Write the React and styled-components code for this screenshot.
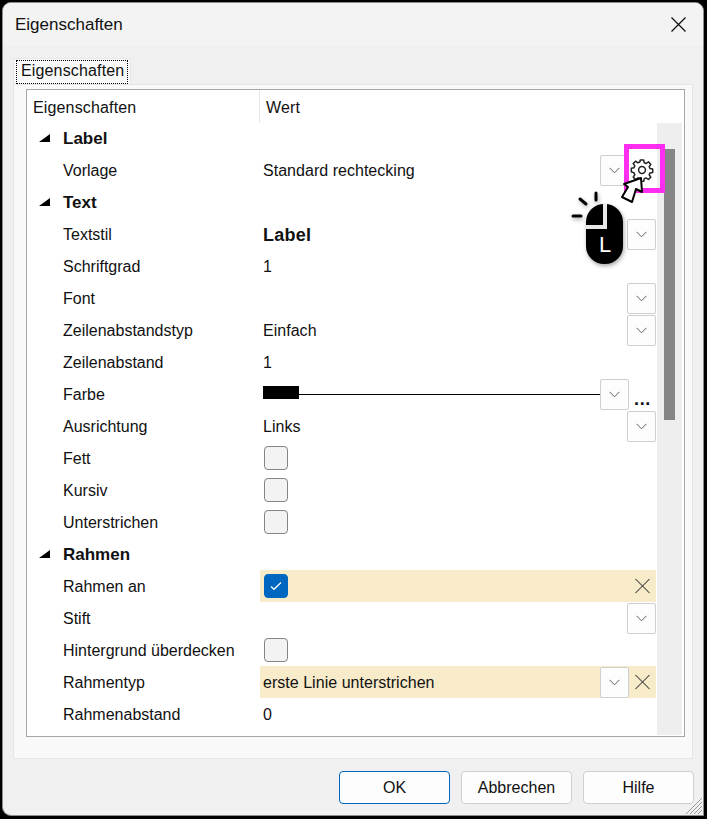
import React from 'react';
import styled, { createGlobalStyle } from 'styled-components';
import { X } from 'lucide-react';

const Global = createGlobalStyle`
  html, body { margin: 0; padding: 0; background: #fff; }
  body { width: 707px; height: 819px; overflow: hidden; font-family: "Liberation Sans", Arial, sans-serif; color: #111; }
  * { box-sizing: border-box; }
`;
const Frame = styled.div`
  width: 707px; height: 819px; background: #000; padding: 2px 3px 3px 2px;
`;
const Dialog = styled.div`
  position: relative; width: 100%; height: 100%; background: #f0f0f0;
  border: 1px solid #8c8c8c; border-radius: 9px 9px 0 9px; overflow: hidden;
  display: flex; flex-direction: column;
`;
const TitleBar = styled.div`
  height: 43px; background: #f3f3f3; display: flex; align-items: center; justify-content: space-between;
  padding: 0 17px 0 12px; font-size: 17px; flex: none;
`;
const CloseIcon = styled.svg`width: 15px; height: 15px; stroke: #111; stroke-width: 1.3; fill: none; display: block;`;
const Body = styled.div`
  flex: 1; padding: 12px 9px 0 10px; display: flex; flex-direction: column; min-height: 0;
`;
const Tab = styled.div`
  align-self: flex-start; height: 26px; width: 118px; background: #f9f9f9; border: 1px solid #e6e6e6; border-bottom: none;
  padding: 1px 2px 0 2px;
`;
const TabLabel = styled.div`
  height: 24px; border: 1px dotted #000; font-size: 16px; line-height: 20px; padding-left: 4px; white-space: nowrap; letter-spacing: 0.15px;
`;
const Pane = styled.div`
  height: 675px; width: 680px; background: #f9f9f9; border: 1px solid #e6e6e6; padding: 4px 7px 0 12px;
`;
const Grid = styled.div`
  height: 648px; background: #fff; border: 1px solid #a6a6a6; display: flex; flex-direction: column; position: relative;
`;
const HeaderRow = styled.div`
  height: 32px; display: grid; grid-template-columns: 233px 1fr; font-size: 16px; flex: none;
`;
const HeaderCell = styled.div`
  display: flex; align-items: center; padding: 3px 0 0 ${p => p.$pad}px; height: 33px; letter-spacing: 0.15px;
  ${p => p.$divider ? 'border-right: 1px solid #e6e6e6;' : ''}
`;
const Content = styled.div`display: flex; flex: 1; min-height: 0;`;
const Rows = styled.div`width: 630px; flex: none; overflow: hidden;`;
const Row = styled.div`
  height: 32px; display: grid; grid-template-columns: 233px 396px; font-size: 16px;
`;
const NameCell = styled.div`
  display: flex; align-items: center; padding-top: 2px; padding-left: ${p => p.$group ? 12 : 36}px;
  font-weight: ${p => p.$group ? 700 : 400}; font-size: ${p => p.$group ? 17 : 16}px;
  white-space: nowrap;
`;
const Arrow = styled.span`
  width: 0; height: 0; border-style: solid; border-width: 0 0 8px 11px; border-color: transparent transparent #000 transparent;
  margin-right: 13px; margin-top: -2px;
`;
const ValueCell = styled.div`
  display: flex; align-items: center; padding-left: 3px; min-width: 0;
  background: ${p => p.$hl ? '#f7ebca' : 'transparent'};
`;
const ValueText = styled.span`
  flex: 1; white-space: nowrap; padding-top: 2px;
  font-weight: ${p => p.$bold ? 700 : 400}; font-size: ${p => p.$bold ? 18 : 16}px;
  letter-spacing: ${p => p.$bold ? '0.25px' : '0.03px'};
`;
const Combo = styled.div`
  width: 29px; height: 31px; flex: none; background: #fdfdfd; border: 1px solid #cfcfcf; border-radius: 2px;
  display: flex; align-items: center; justify-content: center;
`;
const Chevron = () => (
  <svg width="11" height="7" viewBox="0 0 11 7" fill="none" stroke="#5f5f5f" strokeWidth="1"><path d="M.5.8 5.500 5.800 10.500.8" /></svg>
);
const GearSlot = styled.div`width: 27px; height: 31px; flex: none;`;
const ClearSlot = styled.div`width: 27px; height: 31px; flex: none; display: flex; align-items: center; justify-content: center; color: #3c3c3c;`;
const Check = styled.div`
  width: 24px; height: 24px; margin-left: 1px; border-radius: 4px; flex: none;
  background: ${p => p.$on ? '#0067c0' : '#f3f3f3'}; border: 1px solid ${p => p.$on ? '#0067c0' : '#858585'};
  display: flex; align-items: center; justify-content: center;
`;
const CheckFill = styled.span`flex: 1;`;
const ColorLine = styled.div`flex: 1; position: relative; height: 1px; background: #000; margin-top: 1px;`;
const Swatch = styled.div`position: absolute; left: 0; top: -8px; width: 36px; height: 13px; background: #000;`;
const Dots = styled.div`
  width: 27px; flex: none; align-self: flex-end; margin-bottom: 4px; text-align: center; font-size: 18px; font-weight: 700; letter-spacing: 0.6px; line-height: 14px;
`;
const ScrollTrack = styled.div`width: 25px; margin: 1px 0 1px; background: #eeeeee; flex: none; padding: 26px 7px 0 7px;`;
const ScrollThumb = styled.div`width: 11px; height: 271px; background: #868686;`;
const Footer = styled.div`
  flex: 1; display: flex; justify-content: flex-end; align-items: flex-start; gap: 11px; padding: 12px 0 0 0;
`;
const DlgButton = styled.button`
  width: 111px; height: 33px; background: #fdfdfd; font: 16px "Liberation Sans", Arial, sans-serif; color: #111; padding: 0;
  border-radius: 4px; border: 1px solid ${p => p.$primary ? '#0067c0' : '#d0d0d0'};
`;
const Grip = styled.svg`position: absolute; right: 0; bottom: 0; width: 19px; height: 19px;`;
const PinkBox = styled.div`
  position: absolute; left: 621px; top: 141px; width: 41px; height: 49px; border: 5px solid #ff2df0;
`;
const Gear = styled.svg`position: absolute; left: 626.5px; top: 155px; width: 24px; height: 24px; fill: none; stroke: #222; stroke-width: 1.5;`;
const Pointer = styled.svg`position: absolute; left: 0; top: 0; width: 704px; height: 300px; pointer-events: none;`;
const Mouse = styled.svg`position: absolute; left: 570px; top: 187px; width: 60px; height: 80px; overflow: visible; filter: drop-shadow(1px 2px 2px rgba(0,0,0,.35));`;
const MouseLabel = styled.span`
  position: absolute; left: 596px; top: 231px; color: #fff; font-size: 22px; line-height: 22px;
`;

const groupRows = [
  { g: 'Label' },
  { n: 'Vorlage', t: 'Standard rechtecking', combo: true, gear: true },
  { g: 'Text' },
  { n: 'Textstil', t: 'Label', bold: true, combo: true },
  { n: 'Schriftgrad', t: '1' },
  { n: 'Font', combo: true },
  { n: 'Zeilenabstandstyp', t: 'Einfach', combo: true },
  { n: 'Zeilenabstand', t: '1' },
  { n: 'Farbe', color: true },
  { n: 'Ausrichtung', t: 'Links', combo: true },
  { n: 'Fett', check: 'off' },
  { n: 'Kursiv', check: 'off' },
  { n: 'Unterstrichen', check: 'off' },
  { g: 'Rahmen' },
  { n: 'Rahmen an', check: 'on', hl: true, clear: true },
  { n: 'Stift', combo: true },
  { n: 'Hintergrund überdecken', check: 'off' },
  { n: 'Rahmentyp', t: 'erste Linie unterstrichen', hl: true, combo: true, clear: true },
  { n: 'Rahmenabstand', t: '0' },
];

const GearPath = () => (
  <>
    <path d="M10.300 2h3.400l.5 2.700 1.900.8 2.300-1.600 2.400 2.400-1.600 2.300.8 1.900 2.700.5v3.400l-2.700.5-.8 1.900 1.600 2.300-2.400 2.400-2.300-1.600-1.900.8-.5 2.700h-3.400l-.5-2.700-1.900-.8-2.300 1.600-2.400-2.400 1.600-2.300-.8-1.900L1.300 13.700v-3.400l2.700-.5.8-1.900-1.600-2.300 2.400-2.400 2.300 1.600 1.900-.8z" strokeLinejoin="round" />
    <circle cx="12" cy="12" r="3.400" />
  </>
);

export default function App() {
  return (
    <Frame>
      <Global />
      <Dialog>
        <TitleBar>
          <span>Eigenschaften</span>
          <CloseIcon viewBox="0 0 15 15"><path d="M.5.5 14.500 14.500M14.500.5.5 14.500" /></CloseIcon>
        </TitleBar>
        <Body>
          <Tab><TabLabel>Eigenschaften</TabLabel></Tab>
          <Pane>
            <Grid>
              <HeaderRow>
                <HeaderCell $pad={6} $divider>Eigenschaften</HeaderCell>
                <HeaderCell $pad={6}>Wert</HeaderCell>
              </HeaderRow>
              <Content>
                <Rows>
                  {groupRows.map((r, i) => r.g ? (
                    <Row key={i}><NameCell $group><Arrow />{r.g}</NameCell><div /></Row>
                  ) : (
                    <Row key={i}>
                      <NameCell>{r.n}</NameCell>
                      <ValueCell $hl={r.hl}>
                        {r.check && (
                          <Check $on={r.check === 'on'}>
                            {r.check === 'on' && (
                              <svg width="12" height="10" viewBox="0 0 12 10" fill="none" stroke="#fff" strokeWidth="1.200"><path d="M1 5.500 4 8.300 11 1.500" /></svg>
                            )}
                          </Check>
                        )}
                        {r.check && <CheckFill />}
                        {r.color && <ColorLine><Swatch /></ColorLine>}
                        {!r.color && !r.check && <ValueText $bold={r.bold}>{r.t}</ValueText>}
                        {r.combo && <Combo><Chevron /></Combo>}
                        {r.color && <Combo><Chevron /></Combo>}
                        {r.color && <Dots>...</Dots>}
                        {r.gear && <GearSlot />}
                        {r.clear && <ClearSlot><X size={32} strokeWidth={0.9} /></ClearSlot>}
                      </ValueCell>
                    </Row>
                  ))}
                </Rows>
                <ScrollTrack><ScrollThumb /></ScrollTrack>
              </Content>
            </Grid>
          </Pane>
          <Footer>
            <DlgButton $primary>OK</DlgButton>
            <DlgButton>Abbrechen</DlgButton>
            <DlgButton>Hilfe</DlgButton>
          </Footer>
        </Body>
        <PinkBox />
        <Gear viewBox="0 0 24 24"><GearPath /></Gear>
        <Pointer viewBox="0 0 704 300">
          <path d="M638 175 639 189 633 186 629 199 619 194 625 184 621 181Z" fill="#fff" stroke="#000" strokeWidth="2" strokeLinejoin="round" />
        </Pointer>
        <Mouse viewBox="0 0 60 80">
          <rect x="13" y="14" width="37" height="60" rx="18" fill="#000" />
          <path d="M32 14V37H13" fill="none" stroke="#e8e8e8" strokeWidth="4" />
          <path d="M23 3V10M7 9 13 14M0 26H8" stroke="#000" strokeWidth="3" strokeLinecap="round" />
        </Mouse>
        <MouseLabel>L</MouseLabel>
        <Grip viewBox="0 0 19 19"><path d="M18 6 6 18M18 10 10 18M18 14 14 18M18 2 2 18" stroke="#9a9a9a" strokeWidth="1" /></Grip>
      </Dialog>
    </Frame>
  );
}
